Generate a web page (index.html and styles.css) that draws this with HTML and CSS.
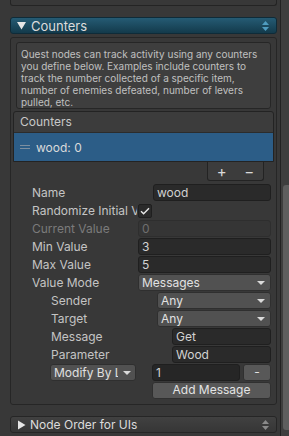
FILE: index.html
```
<!DOCTYPE html>
<html>
<head>
<meta charset="utf-8" />
<title>Quest Node Inspector</title>
<link rel="stylesheet" href="styles.css">
</head>
<body>
<div class="inspector">
  <div class="pane">
    <div class="prevBox"></div>

    <div class="foldout open">
      <svg class="tri" width="9" height="9" viewBox="0 0 9 9"><path d="M0 1h9L4.5 8.5z" fill="#e6e6e6"/></svg>
      <span class="foldTitle">Counters</span>
      <svg class="updown" width="7" height="10" viewBox="0 0 7 10"><path d="M3.5 0L7 4H0z M0 6h7L3.5 10z" fill="#4f9cc0"/></svg>
    </div>

    <div class="section">
      <div class="help">Quest nodes can track activity using any counters you define below. Examples include counters to track the number collected of a specific item, number of enemies defeated, number of levers pulled, etc.</div>

      <div class="list">
        <div class="listHead">Counters</div>
        <div class="listRow">
          <svg class="handle" width="10" height="5" viewBox="0 0 10 5"><path d="M0 0.5h10M0 3.5h10" stroke="#7d8fa0" stroke-width="1"/></svg>
          <span>wood: 0</span>
        </div>
      </div>
      <div class="listFoot"><span>+</span><span>−</span></div>

      <div class="props">
        <div class="row">
          <span class="label wide">Name</span>
          <div class="field">wood</div>
        </div>
        <div class="row">
          <span class="label clip">Randomize Initial V</span>
          <div class="check"><svg width="10" height="8" viewBox="0 0 10 8"><path d="M1 4.2l2.6 2.6L9 1.2" stroke="#e8e8e8" stroke-width="1.4" fill="none"/></svg></div>
        </div>
        <div class="row">
          <span class="label off">Current Value</span>
          <div class="field off">0</div>
        </div>
        <div class="row">
          <span class="label">Min Value</span>
          <div class="field">3</div>
        </div>
        <div class="row">
          <span class="label">Max Value</span>
          <div class="field">5</div>
        </div>
        <div class="row">
          <span class="label">Value Mode</span>
          <div class="popup">Messages<i class="arr"></i></div>
        </div>
        <div class="row sub">
          <span class="label">Sender</span>
          <div class="popup">Any<i class="arr"></i></div>
        </div>
        <div class="row sub">
          <span class="label">Target</span>
          <div class="popup">Any<i class="arr"></i></div>
        </div>
        <div class="row sub">
          <span class="label wide">Message</span>
          <div class="field">Get</div>
        </div>
        <div class="row sub">
          <span class="label wide">Parameter</span>
          <div class="field">Wood</div>
        </div>
        <div class="row sub">
          <div class="popup small"><span class="popText">Modify By Li</span><i class="arr"></i></div>
          <div class="field num">1</div>
          <div class="btn minus">-</div>
        </div>
        <div class="row sub">
          <div class="btn add">Add Message</div>
        </div>
      </div>
    </div>

    <div class="foldout closed">
      <svg class="tri" width="9" height="10" viewBox="0 0 9 10"><path d="M1 0.5v9L8.5 5z" fill="#e6e6e6"/></svg>
      <span class="foldTitle">Node Order for UIs</span>
      <svg class="updown" width="7" height="10" viewBox="0 0 7 10"><path d="M3.5 0L7 4H0z M0 6h7L3.5 10z" fill="#8a8a8a"/></svg>
    </div>
  </div>
  <div class="scrollbar"><div class="thumb"></div></div>
</div>
</body>
</html>
```
FILE: styles.css
```
html, body {
    margin: 0;
    padding: 0;
    background: #383838;
}
body {
    font-family: Inter, "Noto Sans", sans-serif;
    font-size: 12px;
    color: #c4c4c4;
}
.inspector {
    display: flex;
    width: 289px;
    height: 436px;
    overflow: hidden;
}
.pane {
    width: 267px;
    padding: 0 3px 0 10px;
}
.prevBox {
    height: 5px;
    border: 1px solid #242424;
    border-top: none;
    border-radius: 0 0 3px 3px;
    margin-bottom: 11px;
}
.foldout {
    display: flex;
    align-items: center;
    height: 15px;
    border: 1px solid #0f2b38;
    border-radius: 3px;
    padding: 0 7px 0 6px;
}
.foldout.open {
    background: linear-gradient(#255b74, #133a4b);
    margin-bottom: 3px;
}
.foldout.closed {
    background: linear-gradient(#414141, #363636);
    border-color: #262626;
    margin-top: 11px;
}
.tri {
    margin-right: 5px;
}
.foldTitle {
    flex: 1;
    font-size: 13px;
    color: #dcdcdc;
}
.closed .tri {
    margin-right: 4px;
}
.closed .foldTitle {
    font-size: 12px;
}
.section {
    border: 1px solid #262626;
    border-radius: 3px;
    padding: 4px 2px 5px;
    height: 357px;
}
.help {
    margin: 0 3px 2px;
    padding: 5px 4px 0;
    height: 60px;
    border: 1px solid #262626;
    border-radius: 3px;
    background: #3e3e3e;
    font-size: 10px;
    line-height: 12px;
    color: #c0c0c0;
}
.list {
    border: 1px solid #232323;
    border-radius: 3px 3px 0 0;
    background: #3c3c3c;
}
.listHead {
    height: 20px;
    line-height: 20px;
    padding-left: 6px;
    border-bottom: 1px solid #2c2c2c;
    color: #c8c8c8;
}
.listRow {
    display: flex;
    align-items: center;
    height: 28px;
    background: #2c5d87;
    color: #dadada;
}
.handle {
    margin: 0 6px 0 6px;
}
.listFoot {
    display: flex;
    justify-content: space-around;
    align-items: center;
    width: 55px;
    height: 18px;
    margin-left: 194px;
    border: 1px solid #232323;
    border-top: none;
    border-radius: 0 0 3px 3px;
    background: #3c3c3c;
    font-size: 15px;
    color: #dadada;
}
.props {
    margin-top: 3px;
    padding: 0 3px 0 19px;
}
.row {
    display: flex;
    align-items: center;
    height: 17px;
    margin-bottom: 1px;
}
.row.sub {
    padding-left: 19px;
}
.label {
    width: 106px;
    flex: none;
    white-space: nowrap;
    overflow: hidden;
}
.label.wide {
    width: 121px;
}
.label.off {
    color: #7b7b7b;
}
.label.clip {
    width: 105px;
    margin-right: 1px;
}
.field {
    flex: 1;
    height: 15px;
    line-height: 15px;
    padding: 0 3px;
    border: 1px solid #1f1f1f;
    border-radius: 3px;
    background: #2a2a2a;
    color: #d2d2d2;
}
.field.off {
    background: #353535;
    border-color: #2e2e2e;
    color: #6f6f6f;
}
.check {
    width: 12px;
    height: 12px;
    border: 1px solid #1f1f1f;
    border-radius: 2px;
    background: #2a2a2a;
    display: flex;
    align-items: center;
    justify-content: center;
}
.popup {
    flex: 1;
    position: relative;
    height: 15px;
    line-height: 15px;
    padding: 0 3px;
    border: 1px solid #2f2f2f;
    border-radius: 3px;
    background: #515151;
    color: #e2e2e2;
    white-space: nowrap;
    overflow: hidden;
}
.arr {
    position: absolute;
    right: 5px;
    top: 6px;
    border-left: 4px solid transparent;
    border-right: 4px solid transparent;
    border-top: 4px solid #dadada;
}
.popup.small {
    flex: none;
    display: flex;
    width: 75px;
    margin-left: -1px;
    padding-right: 6px;
    color: #e0e0e0;
}
.popText {
    width: 64px;
    overflow: hidden;
}
.popup.small .arr {
    right: 4px;
}
.field.num {
    flex: none;
    width: 80px;
    margin-left: 16px;
    background: #262626;
}
.btn {
    height: 15px;
    line-height: 14px;
    border: 1px solid #303030;
    border-radius: 3px;
    background: #585858;
    color: #e4e4e4;
    text-align: center;
}
.btn.minus {
    width: 27px;
    margin-left: 3px;
}
.btn.add {
    width: 117px;
    margin-left: 101px;
}
.scrollbar {
    width: 8px;
    border-left: 1px solid #222222;
    background: #3e3e3e;
    display: flex;
    flex-direction: column;
    align-items: flex-end;
}
.thumb {
    width: 6px;
    height: 245px;
    margin-top: 185px;
    border-radius: 3px 0 0 3px;
    background: #5e5e5e;
}
```
